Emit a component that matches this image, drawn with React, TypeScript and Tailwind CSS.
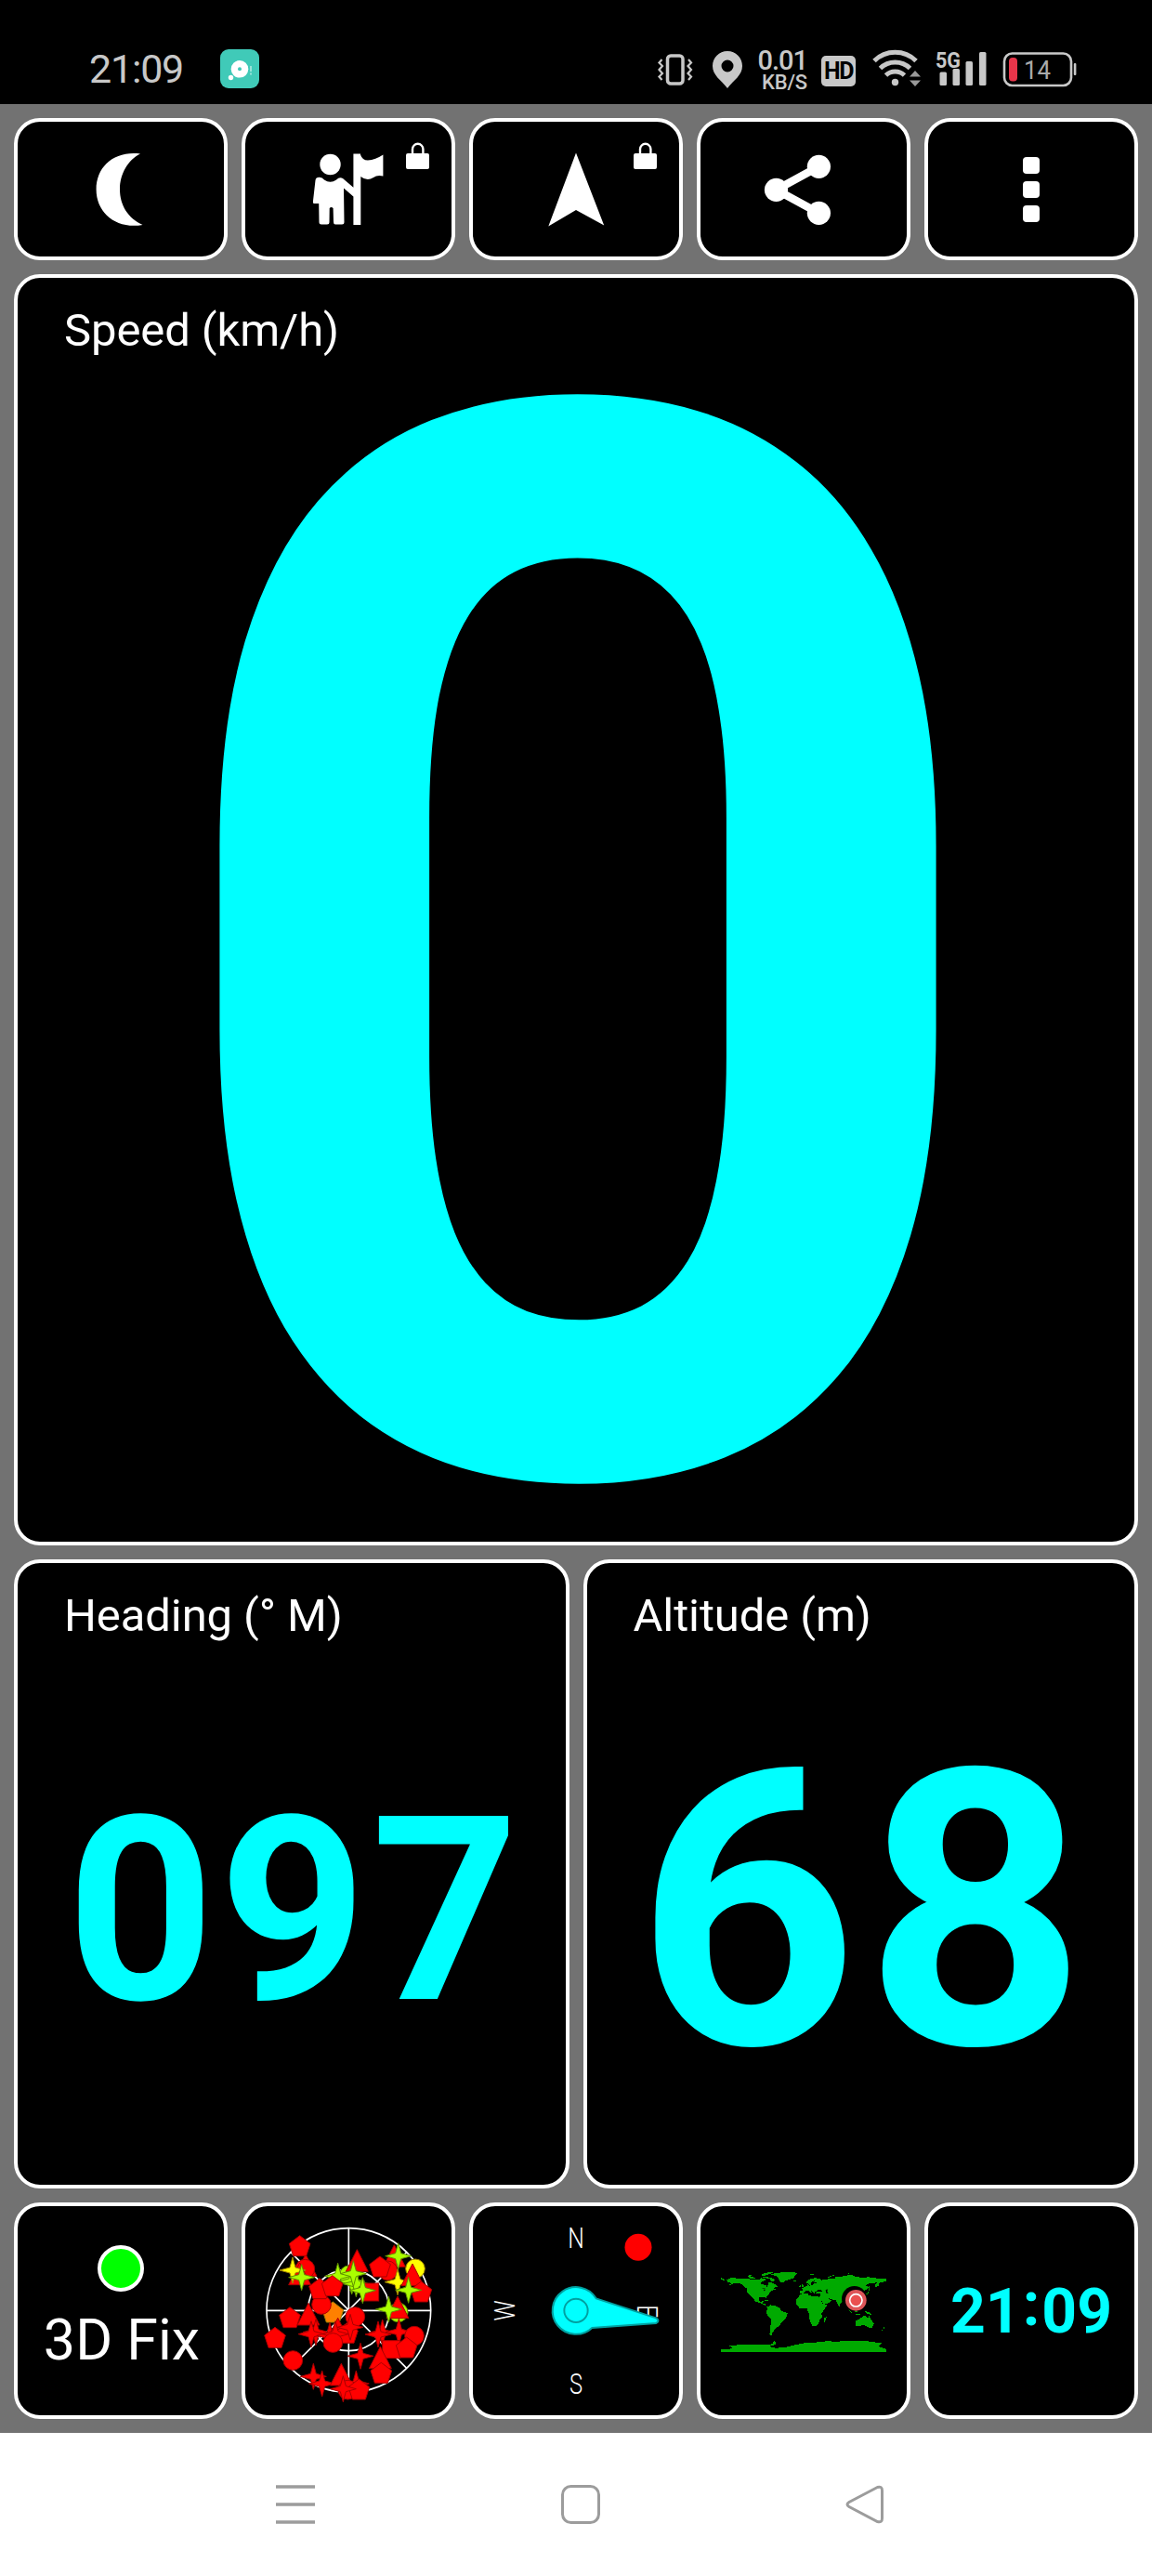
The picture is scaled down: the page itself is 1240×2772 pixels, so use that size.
import type { ReactNode } from "react";

type Shape = "pentagon" | "triangle" | "star" | "circle" | "square";
type Sat = [Shape, number, number, string];

const RED = "#ff0000";
const LIME = "#aaff00";
const YELLOW = "#ffff00";

const satellites: Sat[] = [
  ["triangle", 222, 222, RED],
  ["circle", 220, 230, RED],
  ["pentagon", 203, 157, RED],
  ["triangle", 203, 250, RED],
  ["star", 180, 234, YELLOW],
  ["star", 209, 257, LIME],
  ["circle", 362, 250, LIME],
  ["star", 326, 253, LIME],
  ["triangle", 388, 207, RED],
  ["star", 371, 270, LIME],
  ["star", 385, 278, LIME],
  ["star", 376, 245, LIME],
  ["square", 430, 305, RED],
  ["star", 406, 299, LIME],
  ["triangle", 508, 192, RED],
  ["circle", 487, 235, RED],
  ["pentagon", 462, 224, RED],
  ["star", 521, 188, LIME],
  ["circle", 576, 229, YELLOW],
  ["star", 519, 272, YELLOW],
  ["triangle", 567, 253, RED],
  ["pentagon", 595, 305, RED],
  ["star", 554, 298, LIME],
  ["circle", 521, 370, LIME],
  ["triangle", 519, 358, RED],
  ["star", 490, 360, LIME],
  ["pentagon", 310, 371, "#ff8000"],
  ["circle", 273, 345, RED],
  ["pentagon", 267, 295, RED],
  ["pentagon", 308, 286, RED],
  ["circle", 382, 384, RED],
  ["pentagon", 171, 388, RED],
  ["triangle", 231, 380, RED],
  ["pentagon", 123, 453, RED],
  ["star", 255, 434, RED],
  ["star", 240, 440, RED],
  ["star", 300, 445, RED],
  ["triangle", 326, 428, RED],
  ["pentagon", 357, 438, RED],
  ["star", 318, 440, RED],
  ["star", 366, 418, RED],
  ["circle", 310, 468, RED],
  ["star", 470, 435, RED],
  ["star", 456, 441, RED],
  ["star", 523, 433, RED],
  ["circle", 573, 446, RED],
  ["square", 499, 490, RED],
  ["pentagon", 548, 485, RED],
  ["star", 399, 511, RED],
  ["triangle", 463, 520, RED],
  ["pentagon", 466, 567, RED],
  ["circle", 181, 525, RED],
  ["star", 247, 577, RED],
  ["star", 275, 600, RED],
  ["triangle", 337, 575, RED],
  ["star", 385, 600, RED],
  ["circle", 358, 620, RED],
  ["pentagon", 394, 620, RED],
  ["star", 343, 617, RED],
];

function SatMark({ sat }: { sat: Sat }) {
  const [shape, x, y, color] = sat;
  const common = {
    fill: color,
    stroke: color === RED ? "#a80000" : color === LIME ? "#609000" : "#a08000",
    strokeWidth: 3,
    transform: `translate(${x} ${y})`,
  };
  if (shape === "circle") return <circle r="31" {...common} />;
  if (shape === "square") return <rect x="-29" y="-29" width="57" height="57" {...common} />;
  if (shape === "triangle") return <path d="M0-40L36 31H-36Z" {...common} />;
  if (shape === "star")
    return <path d="M0-42L9-9L42 0L9 9L0 42L-9 9L-42 0L-9-9Z" {...common} />;
  return <path d="M0-35L34-9L21 31H-21L-34-9Z" {...common} />;
}

function Tile({ children }: { children?: ReactNode }) {
  return (
    <div className="flex h-full min-w-0 flex-1 items-center justify-center overflow-hidden rounded-[28px] border-4 border-white bg-black">
      {children}
    </div>
  );
}

function Lock() {
  return (
    <g>
      <rect x="173" y="34" width="25" height="17" rx="2" fill="#fff" />
      <path d="M180 35V29.500a5.700 5.700 0 0 1 11.400 0V35" fill="none" stroke="#fff" strokeWidth="2.400" />
    </g>
  );
}

function ToolIcon({ children }: { children: ReactNode }) {
  return (
    <svg viewBox="0 0 222 145" className="h-[145px] w-[222px]" fill="#fff">
      {children}
    </svg>
  );
}

function Panel({ label, children }: { label: string; children: ReactNode }) {
  return (
    <div className="flex h-full min-w-0 flex-1 flex-col rounded-[28px] border-4 border-white bg-black">
      <div className="pt-8 pl-[50px] text-[49px] leading-[50px] tracking-[-0.1px] text-white">{label}</div>
      <div className="flex flex-1 items-center justify-center font-bold text-[#00ffff]">
        {children}
      </div>
    </div>
  );
}

function StatusBar() {
  return (
    <div className="flex h-28 items-start justify-between bg-black text-[#c8c8c8]">
      <div className="flex pt-[53px] pl-24">
        <div className="w-[141px] text-[43px] leading-[43px] tracking-[-1.200px]">21:09</div>
        <svg width="42" height="42" viewBox="0 0 42 42">
          <rect width="42" height="42" rx="9" fill="#40cab8" />
          <circle cx="21" cy="21.300" r="9.300" fill="#fff" />
          <circle cx="21" cy="21.300" r="2" fill="#40cab8" />
          <circle cx="11.500" cy="30.500" r="2.700" fill="#fff" />
          <path d="M33 18v6M33 25.500v2" stroke="#b5ebe3" strokeWidth="1.500" />
        </svg>
      </div>
      <div className="flex items-start pt-[53px] pr-[81px]">
        <svg width="108" height="44" viewBox="707 53 108 44" fill="none" stroke="#c8c8c8">
          <rect x="718.500" y="60" width="16.500" height="30" rx="3.500" strokeWidth="3.500" />
          <path d="M712.500 64l-3 3.500 3.500 3.500-3.500 4 3.500 4-3.500 3.500 3 3.500M741 64l3 3.500-3.500 3.500 3.500 4-3.500 4 3.500 3.500-3 3.500" strokeWidth="2.200" />
          <path fillRule="evenodd" d="M783 55c-9 0-16 7-16 16 0 10 9 15 16 24 7-9 16-14 16-24 0-9-7-16-16-16zm0 9.500a6.500 6.500 0 1 1 0 13 6.500 6.500 0 0 1 0-13z" fill="#c8c8c8" stroke="none" />
        </svg>
        <div className="w-[54px] text-right font-medium">
          <div className="text-[29px] leading-[25px] tracking-[-1px]">0.01</div>
          <div className="text-[22px] leading-[22px] tracking-[-0.200px]">KB/S</div>
        </div>
        <div className="mt-[7px] ml-[15px] flex h-[33px] w-[37px] items-center justify-center rounded-[5px] bg-[#c8c8c8] text-[25px] leading-none font-bold tracking-[-1.500px] text-black">
          HD
        </div>
        <svg width="69" height="44" viewBox="938 53 69 44" className="ml-[17px]" fill="none" stroke="#c8c8c8" strokeWidth="5">
          <path d="M941 65.500a32 32 0 0 1 45 0M947.500 73.500a23 23 0 0 1 32 0M953.500 81a14.500 14.500 0 0 1 20 0" />
          <circle cx="963.500" cy="88.500" r="3.700" fill="#c8c8c8" stroke="none" />
          <path d="M985 76l6 6.500h-12zM985 93l6-6.500h-12z" fill="#999" stroke="none" />
        </svg>
        <svg width="152" height="44" viewBox="1007 53 152 44" fill="#c8c8c8" className="overflow-visible font-bold">
          <text x="1007" y="72.500" fontSize="24" textLength="27" lengthAdjust="spacingAndGlyphs">5G</text>
          <rect x="1011.500" y="77.500" width="7.500" height="14.500" rx="1.500" />
          <rect x="1025.500" y="74" width="7.500" height="18" rx="1.500" />
          <rect x="1039.500" y="66" width="7.500" height="26" rx="1.500" />
          <rect x="1054" y="56" width="7.500" height="36" rx="1.500" />
          <rect x="1081" y="57.500" width="72" height="34.500" rx="8.500" fill="none" stroke="#c8c8c8" strokeWidth="2.600" />
          <rect x="1155.800" y="68" width="2.600" height="13" rx="1" />
          <rect x="1086" y="62" width="9" height="25.500" rx="4" fill="#e8354a" />
          <text x="1102" y="85" fontSize="27" fontWeight="400" fill="#aaa" textLength="29" lengthAdjust="spacingAndGlyphs">14</text>
        </svg>
      </div>
    </div>
  );
}

// Land outlines in plain longitude / latitude degrees
const land = [
  "-168,66 -162,70 -156,71 -141,70 -128,70 -115,68 -108,68 -95,68 -93,72 -90,69 -82,69 -82,66 -88,64 -94,61 -93,58 -82,55 -80,51 -78,55 -77,62 -70,61 -65,59 -61,56 -56,52 -66,49 -65,47 -60,46 -70,43 -75,39 -76,35 -81,31 -80,25 -83,29 -90,30 -97,28 -97,22 -94,18 -90,21 -87,21 -89,16 -84,15 -83,10 -77,8 -79,7 -86,12 -94,16 -105,20 -109,26 -114,31 -117,33 -124,40 -124,48 -132,55 -140,60 -150,60 -158,56 -165,54 -157,59 -165,62",
  "-77,8 -72,12 -62,10 -52,5 -50,0 -35,-6 -39,-17 -48,-26 -54,-34 -62,-39 -65,-44 -69,-50 -68,-55 -74,-52 -73,-40 -70,-20 -76,-14 -81,-5 -80,1",
  "-73,78 -60,82 -30,84 -12,82 -20,75 -22,70 -40,65 -44,60 -50,62 -54,68 -58,75",
  "-17,15 -16,24 -10,31 -6,36 10,37 11,33 20,31 32,31 35,27 43,12 51,12 46,3 39,-6 40,-15 35,-21 32,-29 26,-34 19,-34 12,-17 13,-8 9,-1 9,4 -8,4",
  "-9,37 -9,43 -1,44 -4,48 2,51 8,54 9,58 12,54 20,55 23,60 29,60 21,62 25,66 17,61 17,56 12,56 10,59 5,59 6,63 15,69 26,71 41,67 34,65 44,67 55,69 67,69 70,73 80,73 88,75 104,78 113,74 130,71 140,73 160,70 180,69 180,65 177,63 164,60 163,54 156,51 156,57 163,62 155,60 142,59 135,54 141,52 140,47 132,43 129,41 129,35 126,35 125,40 118,39 122,37 119,35 122,30 117,23 108,21 109,12 105,9 100,14 104,1 98,9 97,16 91,22 86,20 80,15 78,8 73,17 70,22 58,25 50,30 56,25 60,22 55,17 44,13 35,28 36,36 27,37 27,40 41,41 38,46 31,46 28,42 24,40 23,36 19,42 13,45 18,40 16,38 9,44 3,42 -1,37",
  "114,-22 114,-34 124,-33 131,-31 138,-35 146,-39 150,-37 153,-28 146,-19 142,-11 140,-17 136,-12 131,-12 122,-18",
  "-180,-84 -160,-84 -155,-80 -162,-77 -145,-75 -115,-74 -100,-74 -80,-74 -68,-73 -66,-68 -57,-63 -62,-66 -60,-74 -76,-78 -60,-82 -35,-79 -20,-75 0,-71 30,-69 55,-66 70,-69 80,-67 110,-66 140,-67 170,-71 164,-76 166,-79 180,-84 180,-91 -180,-91",
  "-120,73 -112,73 -104,71 -108,69 -116,69",
  "-90,73 -78,73 -68,70 -62,66 -66,63 -74,65 -73,69 -84,71",
  "-95,77 -88,80 -78,83 -65,83 -75,79 -85,76",
  "-125,76 -115,77 -110,75 -120,74",
  "-5,50 1,51 -2,56 -5,58 -5,55",
  "-10,52 -6,52 -6,55 -9,54",
  "-24,65 -15,66 -14,65 -20,63",
  "44,-17 50,-13 49,-20 46,-25 44,-24",
  "95,5 106,-4 105,-6 102,-3",
  "109,1 117,6 117,-3 111,-3",
  "131,-1 141,-3 150,-10 143,-8 138,-7",
  "106,-6 115,-8 124,-8 124,-10 114,-9",
  "131,32 136,34 140,36 142,40 141,44 145,43 142,45 142,54 144,49 139,38 131,33",
  "173,-35 178,-38 173,-42 167,-46 171,-42 175,-40",
  "-85,22 -79,23 -74,20 -80,21",
  "-73,18 -68,19 -73,20",
  "53,72 58,76 68,77 57,73 56,71",
  "12,79 20,80 28,80 18,77",
  "95,80 102,79 98,81",
  "-180,71 -170,67 -174,66 -180,67",
  "140,75 150,75 145,76",
];

function WorldMap() {
  return (
    <svg viewBox="42 42 666 675" className="h-[225px] w-[222px]">
      <g transform="translate(375 379) scale(1.483 -1.483)" fill="#00aa00" shapeRendering="crispEdges">
        {land.map((points) => (
          <polygon key={points} points={points} />
        ))}
      </g>
      {/* inland seas */}
      <g transform="translate(375 379) scale(1.483 -1.483)" fill="#000">
        <path d="M48 45L53 46L51 42L54 37L49 38Z" />
        <path d="M-92 48L-84 48L-84 46ZM-87 45L-83 45L-86 42Z" />
      </g>
      <circle cx="539" cy="341" r="41" fill="#000" />
      <circle cx="544" cy="346" r="34" fill="#dd5558" />
      <circle cx="544" cy="346" r="20" fill="#ea5050" stroke="#fff" strokeWidth="5" />
    </svg>
  );
}

function SkyView() {
  return (
    <svg viewBox="27 27 666 675" className="h-[225px] w-[222px]">
      <g fill="none" stroke="#fff" strokeWidth="5">
        <circle cx="361" cy="363" r="265" />
        <circle cx="361" cy="363" r="131" />
        <path d="M96 364H626M361 98V628M174 176L548 550M548 176L174 550" />
      </g>
      {satellites.map((sat, i) => (
        <SatMark key={i} sat={sat} />
      ))}
    </svg>
  );
}

function Compass() {
  return (
    <svg viewBox="27 42 666 675" className="h-[225px] w-[222px]">
      <g fill="#fff" fontSize="95" fontWeight="300" textAnchor="middle">
        <text transform="translate(360 178) scale(0.78 1)">N</text>
        <text transform="translate(360 648) scale(0.75 1)">S</text>
        <text transform="translate(162 379) rotate(-90) scale(0.78 1)">W</text>
        <text transform="translate(558 382) rotate(90) scale(0.78 1)">E</text>
      </g>
      <circle cx="561" cy="175" r="43.500" fill="#ff0000" />
      <path
        d="M425 340L618 403Q633 412 618 420L412 435A76 76 0 1 1 425 340Z"
        fill="#00ffff"
        stroke="#00a0a0"
        strokeWidth="6"
      />
      <circle cx="360" cy="379" r="38" fill="none" stroke="#00a0a0" strokeWidth="6" />
    </svg>
  );
}

export default function App() {
  return (
    <div className="flex h-[2772px] w-[1240px] flex-col overflow-hidden bg-white font-[Roboto,sans-serif]">
      <StatusBar />

      <main className="flex h-[2506px] flex-col gap-[15px] bg-[#727272] p-[15px]">
        <div className="flex h-[153px] gap-[15px]">
          <Tile>
            <ToolIcon>
              <path d="M132 34.500C104 31 84.600 48 84.600 73C84.600 98 106 116 134.500 111C119 104 110 90 110 72.500C110 56 119 41 132 34.500Z" />
            </ToolIcon>
          </Tile>
          <Tile>
            <ToolIcon>
              <circle cx="91.500" cy="46" r="11.200" />
              <path d="M116.400 34.500H124V35.500Q126 41.500 132 41.500Q140 41 148.400 35.500V58.500Q142 57 138 60Q131 64.500 124.300 59V111H116.400V80.500L106 71.500L106.500 108Q106.500 110.500 104 110.500H97Q95 110.500 95 108L94.600 93Q92.500 91 90.700 93L90.500 108Q90.500 110.500 88 110.500H82Q79.500 110.500 79.500 108L79.200 88H74Q72.600 88 72.900 86L75.500 63Q76 59.500 80 59.700Q83 60 85 62.500Q91.500 67 98 62.500Q101.500 59 105 61L116.400 70.700Z" />
              <Lock />
            </ToolIcon>
          </Tile>
          <Tile>
            <ToolIcon>
              <path d="M111 33.500L141.200 111.500L111 95L81.300 112.500Z" />
              <Lock />
            </ToolIcon>
          </Tile>
          <Tile>
            <ToolIcon>
              <path d="M127.400 48.300L81.500 73.300L127.400 98.300" fill="none" stroke="#fff" strokeWidth="8.500" />
              <circle cx="81.500" cy="73.300" r="12.600" />
              <circle cx="127.400" cy="48.300" r="12.600" />
              <circle cx="127.400" cy="98.300" r="12.600" />
            </ToolIcon>
          </Tile>
          <Tile>
            <ToolIcon>
              <rect x="102" y="38" width="18" height="18" rx="4" />
              <rect x="102" y="64" width="18" height="18" rx="4" />
              <rect x="102" y="90" width="18" height="18" rx="4" />
            </ToolIcon>
          </Tile>
        </div>

        <div className="flex h-[1368px]">
          <Panel label="Speed (km/h)">
            <span className="mt-[26px] ml-1 text-[1605px] leading-[0.71]">0</span>
          </Panel>
        </div>

        <div className="flex h-[677px] gap-[15px]">
          <Panel label={"Heading (\u00b0 M)"}>
            <span className="ml-2 text-[277px] leading-[0.71] tracking-[5px]">097</span>
          </Panel>
          <Panel label="Altitude (m)">
            <span className="ml-[9px] text-[415px] leading-[0.71] tracking-[7.500px]">68</span>
          </Panel>
        </div>

        <div className="flex h-[233px] gap-[15px]">
          <Tile>
            <div className="flex flex-col items-center gap-[18px] pb-1.5">
              <div className="h-[50px] w-[50px] rounded-full border-4 border-white bg-[#00ff00]" />
              <div className="pl-0.5 text-[61px] leading-[68px] text-white">3D Fix</div>
            </div>
          </Tile>
          <Tile>
            <SkyView />
          </Tile>
          <Tile>
            <Compass />
          </Tile>
          <Tile>
            <WorldMap />
          </Tile>
          <Tile>
            <div className="flex pt-0.5 text-[66px] leading-none font-bold text-[#00ffff]">
              <span>21</span>
              <span className="-mt-2 px-0.5">:</span>
              <span>09</span>
            </div>
          </Tile>
        </div>
      </main>

      <nav className="flex flex-1 bg-white pt-[54px]">
        <svg width="1240" height="46" viewBox="0 2672 1240 46" fill="none" stroke="#9c9c9c" strokeWidth="3">
          <path d="M297 2676H339M297 2695H339M297 2714H339" strokeWidth="3.600" />
          <rect x="605.500" y="2675.500" width="39" height="39" rx="9" />
          <path d="M944.500 2676.500L914 2692.500Q910 2695 914 2697.500L944.500 2713.500Q949.500 2715 949.500 2710V2680Q949.500 2675 944.500 2676.500Z" />
        </svg>
      </nav>
    </div>
  );
}
